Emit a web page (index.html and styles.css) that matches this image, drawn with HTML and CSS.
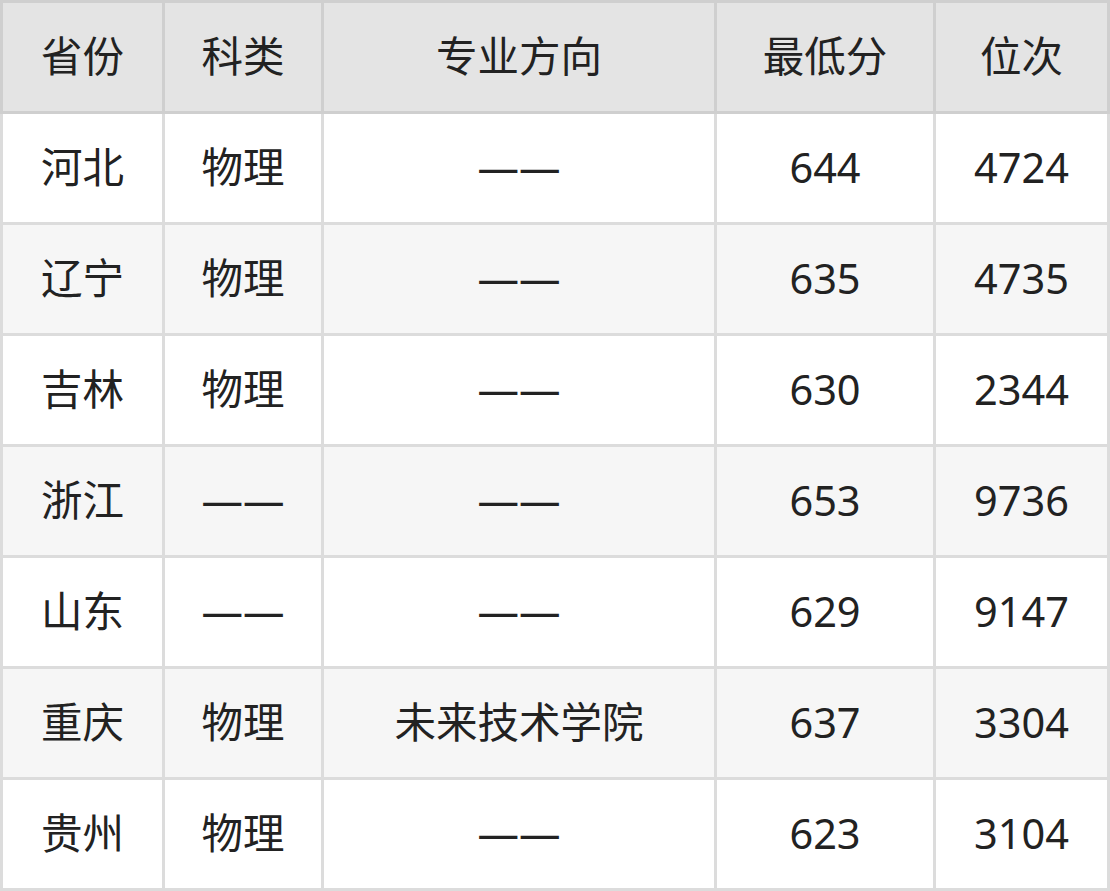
FILE: index.html
```html
<!DOCTYPE html>
<html lang="zh">
<head>
<meta charset="utf-8">
<link rel="stylesheet" href="styles.css">
</head>
<body>
<div class="table">
  <div class="grid head">
    <div class="cell">省份</div>
    <div class="cell">科类</div>
    <div class="cell">专业方向</div>
    <div class="cell">最低分</div>
    <div class="cell">位次</div>
  </div>
  <div class="grid body">
    <div class="cell">河北</div><div class="cell">物理</div><div class="cell">——</div><div class="cell">644</div><div class="cell">4724</div>
    <div class="cell alt">辽宁</div><div class="cell alt">物理</div><div class="cell alt">——</div><div class="cell alt">635</div><div class="cell alt">4735</div>
    <div class="cell">吉林</div><div class="cell">物理</div><div class="cell">——</div><div class="cell">630</div><div class="cell">2344</div>
    <div class="cell alt">浙江</div><div class="cell alt">——</div><div class="cell alt">——</div><div class="cell alt">653</div><div class="cell alt">9736</div>
    <div class="cell">山东</div><div class="cell">——</div><div class="cell">——</div><div class="cell">629</div><div class="cell">9147</div>
    <div class="cell alt">重庆</div><div class="cell alt">物理</div><div class="cell alt">未来技术学院</div><div class="cell alt">637</div><div class="cell alt">3304</div>
    <div class="cell">贵州</div><div class="cell">物理</div><div class="cell">——</div><div class="cell">623</div><div class="cell">3104</div>
  </div>
</div>
</body>
</html>
```

FILE: styles.css
```css
html, body {
  margin: 0;
  padding: 0;
  background: #ffffff;
}
.table {
  width: 1110px;
  display: flex;
  flex-direction: column;
  font-family: "Noto Sans", "Noto Sans CJK SC", sans-serif;
  font-size: 41.5px;
  line-height: 1;
  color: #222222;
}
.grid {
  display: grid;
  grid-template-columns: 159px 156px 390px 216px 171px;
  column-gap: 3px;
  row-gap: 3px;
}
.head {
  background: #cfcfcf;
  padding: 3px;
}
.body {
  background: #dcdcdc;
  padding: 0 3px 3px;
}
.cell {
  height: 108px;
  padding-bottom: 1px;
  box-sizing: border-box;
  display: flex;
  align-items: center;
  justify-content: center;
  background: #ffffff;
}
.head .cell {
  background: #e4e4e4;
}
.cell.alt {
  background: #f6f6f6;
}
```
